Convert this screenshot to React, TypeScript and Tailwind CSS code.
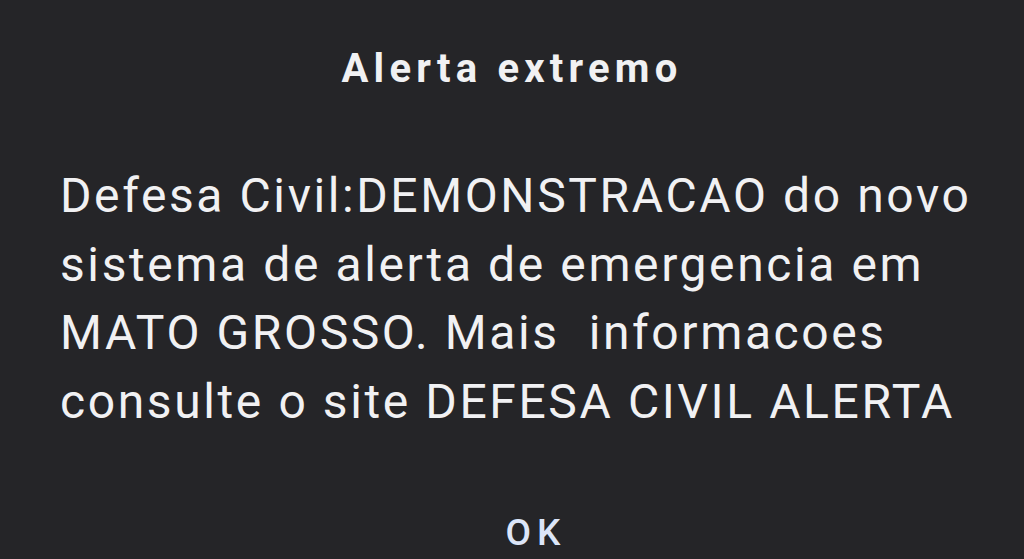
import React from 'react';

export default function App() {
  return (
    <div
      className="w-[1024px] h-[559px] bg-[#252528] text-[#f1f1f3] flex flex-col overflow-hidden"
      style={{ fontFamily: 'Roboto, "Noto Sans", sans-serif' }}
    >
      <h1 className="mt-[43px] text-center text-[40px] leading-[52px] font-bold tracking-[5.2px]">
        Alerta extremo
      </h1>
      <p className="mt-[67px] pl-[60px] pr-[10px] text-[48px] leading-[68.6px] tracking-[2.6px] whitespace-pre-line">
        {'Defesa Civil:DEMONSTRACAO do novo\nsistema de alerta de emergencia em\nMATO GROSSO. Mais\u00a0 informacoes\nconsulte o site DEFESA CIVIL ALERTA'}
      </p>
      <div className="mt-auto mb-[4px] flex justify-center">
        <button className="pl-[48px] text-[37px] leading-[44px] font-medium tracking-[6px] text-[#dce5f8]">OK</button>
      </div>
    </div>
  );
}
